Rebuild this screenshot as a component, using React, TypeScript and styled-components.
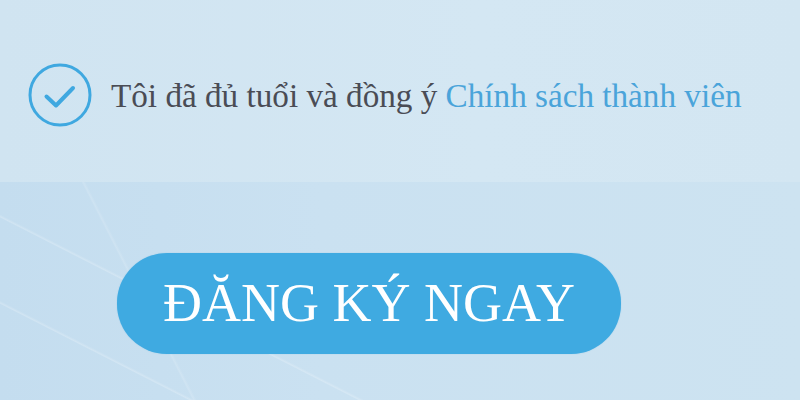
import React from "react";
import styled, { createGlobalStyle } from "styled-components";

const Global = createGlobalStyle`
  html, body { margin: 0; padding: 0; }
  body { width: 800px; height: 400px; overflow: hidden; background: #d3e6f2; }
`;

const Page = styled.div`
  width: 800px;
  height: 400px;
  display: flex;
  flex-direction: column;
  font-family: "Liberation Serif", "Times New Roman", serif;
`;

const TopBand = styled.section`
  height: 182px;
  background: linear-gradient(90deg, #d0e4f1 0%, #d4e7f3 60%, #d3e6f2 100%);
  display: flex;
  align-items: flex-start;
  padding: 63px 0 0 28px;
  box-sizing: border-box;
`;

const AgreeRow = styled.label`
  display: flex;
  align-items: center;
  gap: 19px;
`;

const CheckCircle = styled.span`
  width: 64px;
  height: 64px;
  flex: none;
  display: flex;
  align-items: center;
  justify-content: center;
`;

const AgreeText = styled.span`
  font-size: 33.2px;
  color: #4a4c55;
  margin-top: 2px;
  white-space: nowrap;
`;

const PolicyLink = styled.a`
  color: #4aa4da;
  text-decoration: none;
`;

const BottomBand = styled.section`
  flex: 1;
  background:
    linear-gradient(27deg, transparent 0 15.3%, rgba(255,255,255,0.22) 15.5%, transparent 15.9% 100%),
    linear-gradient(27deg, transparent 0 29.1%, rgba(255,255,255,0.22) 29.3%, transparent 29.7% 100%),
    linear-gradient(63deg, transparent 0 21.1%, rgba(255,255,255,0.15) 21.3%, transparent 21.6% 100%),
    linear-gradient(90deg, #c4ddef 0%, #cae1f1 40%, #cde3f1 100%);
  display: flex;
  align-items: flex-start;
  padding: 71px 0 0 117px;
  box-sizing: border-box;
`;

const SignUpButton = styled.button`
  width: 504px;
  height: 101px;
  border: none;
  border-radius: 50px;
  background: #3faae1;
  color: #ffffff;
  font-family: "Liberation Serif", "Times New Roman", serif;
  font-size: 54px;
  line-height: 1;
  padding: 0 0 2px 0;
  display: flex;
  align-items: center;
  justify-content: center;
  cursor: pointer;
  box-shadow: 0 0 1px rgba(63,170,225,0.5);
`;

export default function App() {
  return (
    <>
      <Global />
      <Page>
        <TopBand>
          <AgreeRow>
            <CheckCircle>
              <svg width="64" height="64" viewBox="0 0 64 64">
                <circle cx="32" cy="32" r="30" fill="none" stroke="#3fa8e0" strokeWidth="3" />
                <path d="M18.5 33.5 L28 42.5 L45 25" fill="none" stroke="#3fa8e0" strokeWidth="4" strokeLinecap="round" strokeLinejoin="round" />
              </svg>
            </CheckCircle>
            <AgreeText>
              Tôi đã đủ tuổi và đồng ý <PolicyLink href="#">Chính sách thành viên</PolicyLink>
            </AgreeText>
          </AgreeRow>
        </TopBand>
        <BottomBand>
          <SignUpButton>ĐĂNG KÝ NGAY</SignUpButton>
        </BottomBand>
      </Page>
    </>
  );
}
